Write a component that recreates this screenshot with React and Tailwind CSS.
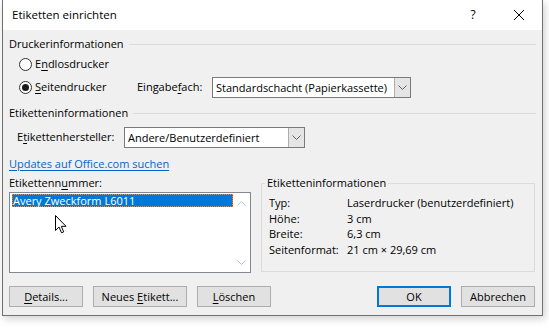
import React from 'react';

const U = ({ children }) => <span className="underline underline-offset-[2px]">{children}</span>;

const Radio = ({ checked, children, className = '' }) => (
  <div className={`flex items-center h-[16px] ${className}`}>
    <span className="w-[13px] h-[13px] rounded-full border border-[#333333] bg-white flex items-center justify-center">
      {checked && <span className="w-[7px] h-[7px] rounded-full bg-[#1b1b1b]" />}
    </span>
    <span className="ml-[3px]">{children}</span>
  </div>
);

const Chevron = ({ up, color = '#606060' }) => (
  <svg width="9" height="5" viewBox="0 0 9 5">
    <path d={up ? 'M0.5 4.5 L4.5 0.5 L8.5 4.5' : 'M0.5 0.5 L4.5 4.5 L8.5 0.5'} fill="none" stroke={color} strokeWidth="1" />
  </svg>
);

const Combo = ({ value, className = '' }) => (
  <div className={`flex h-[21px] bg-white border border-[#7a7a7a] ${className}`}>
    <span className="flex-1 pl-[3px] leading-[19px] whitespace-nowrap overflow-hidden">{value}</span>
    <span className="w-[16px] h-[19px] bg-[#e5e5e5] border-l border-[#adadad] flex items-center justify-center">
      <Chevron />
    </span>
  </div>
);

const Section = ({ title, className = '' }) => (
  <div className={`flex items-center h-[16px] ${className}`}>
    <span className="whitespace-nowrap">{title}</span>
    <span className="flex-1 h-px bg-[#dcdcdc] ml-[5px]" />
  </div>
);

const Btn = ({ children, className = '', primary }) => (
  <button
    className={`h-[21px] bg-[#e1e1e1] text-center leading-[17px] ${
      primary ? 'border-2 border-[#0078d7]' : 'border border-[#adadad]'
    } ${className}`}
  >
    {children}
  </button>
);

const info = [
  ['Typ:', 'Laserdrucker (benutzerdefiniert)'],
  ['Höhe:', '3 cm'],
  ['Breite:', '6,3 cm'],
  ['Seitenformat:', '21 cm × 29,69 cm'],
];

export default function App() {
  return (
    <div className="w-[549px] h-[328px] bg-white overflow-hidden pl-[2px] font-['Open_Sans','Noto_Sans',sans-serif] text-[11px] text-black">
      <div className="w-[541px] h-[316px] flex flex-col border-x border-b border-[#707070] shadow-[2px_3px_8px_rgba(0,0,0,0.18)]">
        {/* title bar */}
        <div className="h-[30px] bg-white flex items-center pl-[9px]">
          <span className="text-[11.5px]">Etiketten einrichten</span>
          <span className="ml-auto w-[46px] text-center text-[12px]">?</span>
          <span className="w-[46px] flex justify-center">
            <svg width="10" height="10" viewBox="0 0 10 10">
              <path d="M0 0 L10 10 M10 0 L0 10" stroke="#000" strokeWidth="1" />
            </svg>
          </span>
        </div>

        {/* body */}
        <div className="flex-1 bg-[#f0f0f0] flex flex-col pt-[6px] pl-[6px] pr-[6px]">
          <Section title="Druckerinformationen" />
          <Radio className="mt-[4px] ml-[10px]">
            E<U>n</U>dlosdrucker
          </Radio>
          <div className="mt-[5px] flex items-center h-[21px] pl-[10px]">
            <Radio checked className="w-[118px]">
              <U>S</U>eitendrucker
            </Radio>
            <span className="w-[75px]">
              Eingabe<U>f</U>ach:
            </span>
            <Combo value="Standardschacht (Papierkassette)" className="w-[199px]" />
          </div>

          <Section title="Etiketteninformationen" className="mt-[7px]" />
          <div className="mt-[6px] flex items-center h-[21px] pl-[8px]">
            <span className="w-[107px]">
              E<U>t</U>ikettenhersteller:
            </span>
            <Combo value="Andere/Benutzerdefiniert" className="w-[181px]" />
          </div>

          <div className="mt-[8px] h-[16px] leading-[16px]">
            <span className="text-[#0066cc] underline underline-offset-[2px]">Updates auf Office.com suchen</span>
          </div>

          <div className="mt-[3px] flex">
            <div className="w-[242px] flex flex-col">
              <div className="h-[16px] leading-[16px]">
                Etikettenn<U>u</U>mmer:
              </div>
              <div className="relative mt-[1px] h-[81px] border border-[#828790] bg-white flex">
                <div className="flex-1 pt-[1px] pl-[2px]">
                  <div className="h-[13px] bg-[#0078d7] text-white leading-[11px] border border-dotted border-[#ff8728] whitespace-nowrap">
                    Avery Zweckform L6011
                  </div>
                </div>
                <div className="w-[17px] flex flex-col items-center justify-between pt-[8px] pb-[7px]">
                  <Chevron up color="#c2c2c2" />
                  <Chevron color="#c2c2c2" />
                </div>
                <svg className="absolute left-[45px] top-[22px]" width="13" height="19" viewBox="0 0 13 19">
                  <path d="M0.5 0.5 L0.5 15.5 L4 12 L6.5 17.8 L8.7 16.9 L6.3 11.3 L11 11.3 Z" fill="#fff" stroke="#000" strokeWidth="1" strokeLinejoin="miter" />
                </svg>
              </div>
            </div>

            <div className="ml-[10px] mt-[8px] relative w-[274px] h-[89px] border border-[#dcdcdc]">
              <span className="absolute left-[3px] top-[-9px] px-[2px] bg-[#f0f0f0] leading-[16px]">
                Etiketteninformationen
              </span>
              <div className="pt-[11px] pl-[7px] grid grid-cols-[78px_1fr]">
                {info.map(([k, v]) => (
                  <React.Fragment key={k}>
                    <span className="leading-[15.7px]">{k}</span>
                    <span className="leading-[15.7px] whitespace-nowrap">{v}</span>
                  </React.Fragment>
                ))}
              </div>
            </div>
          </div>

          <div className="mt-[13px] flex gap-[10px] pr-[1px]">
            <Btn className="w-[74px]">
              <U>D</U>etails...
            </Btn>
            <Btn className="w-[94px]">
              Neues <U>E</U>tikett...
            </Btn>
            <Btn className="w-[74px]">
              <U>L</U>öschen
            </Btn>
            <Btn primary className="w-[74px] ml-auto">
              OK
            </Btn>
            <Btn className="w-[74px]">Abbrechen</Btn>
          </div>
        </div>
      </div>
    </div>
  );
}
